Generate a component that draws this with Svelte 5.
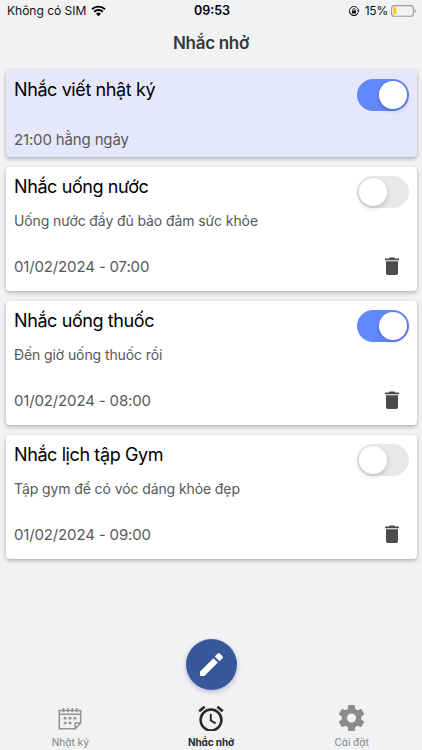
<script>
  const reminders = [
    { title: 'Nhắc viết nhật ký', note: '', time: '21:00 hằng ngày', on: true, daily: true },
    { title: 'Nhắc uống nước', note: 'Uống nước đầy đủ bảo đảm sức khỏe', time: '01/02/2024 - 07:00', on: false },
    { title: 'Nhắc uống thuốc', note: 'Đến giờ uống thuốc rồi', time: '01/02/2024 - 08:00', on: true },
    { title: 'Nhắc lịch tập Gym', note: 'Tập gym để có vóc dáng khỏe đẹp', time: '01/02/2024 - 09:00', on: false }
  ];
</script>

<div class="screen">
  <header class="status">
    <div class="carrier">
      <span>Không có SIM</span>
      <svg width="15" height="12" viewBox="0 0 15 12">
        <path d="M1 4.2A9.5 9.5 0 0 1 14 4.2M3.2 6.7A6.2 6.2 0 0 1 11.8 6.7" fill="none" stroke="#000" stroke-width="1.9" />
        <path d="M7.5 11.3L5 8.7A3.7 3.7 0 0 1 10 8.7Z" fill="#000" />
      </svg>
    </div>
    <div class="clock">09:53</div>
    <div class="power">
      <svg width="12" height="12" viewBox="0 0 12 12">
        <path d="M10.4 5.2A4.5 4.5 0 1 0 8.9 9.4M1.5 6.9A4.5 4.5 0 0 0 10.2 7.4" fill="none" stroke="#111" stroke-width="1" />
        <path d="M8.9 5.2H11.7L10.3 7.2Z" fill="#111" />
        <rect x="4" y="5.5" width="4" height="3" rx=".4" fill="#111" />
        <path d="M4.8 5.7V4.8a1.2 1.2 0 0 1 2.4 0V5.7" fill="none" stroke="#111" stroke-width=".8" />
      </svg>
      <span>15%</span>
      <svg class="battery" width="26" height="12" viewBox="0 0 26 12">
        <rect x=".6" y=".6" width="21.8" height="10.6" rx="2.8" fill="none" stroke="#9b9c9e" stroke-width="1.1" />
        <rect x="2.2" y="2.2" width="3" height="7.4" rx="1.1" fill="#fbcb12" />
        <path d="M23.7 4V8A2.2 2.2 0 0 0 23.7 4Z" fill="#9b9c9e" />
      </svg>
    </div>
  </header>

  <h1>Nhắc nhở</h1>

  <main>
    {#each reminders as r}
      <article class="card" class:daily={r.daily}>
        <div class="top">
          <h2>{r.title}</h2>
          <span class="switch" class:on={r.on}><i></i></span>
        </div>
        {#if r.note}<p>{r.note}</p>{/if}
        <div class="bottom">
          <time>{r.time}</time>
          {#if !r.daily}
            <svg width="14" height="18" viewBox="0 0 14 18" fill="#4b4b4b">
              <path d="M0 1.4H3.8L4.8.6H9.2L10.2 1.4H14V3.2H0ZM1 4.3H13V16.2a1.8 1.8 0 0 1-1.8 1.8H2.8a1.8 1.8 0 0 1-1.8-1.8Z" />
            </svg>
          {/if}
        </div>
      </article>
    {/each}
  </main>

  <div class="compose">
    <button aria-label="+">
      <svg width="33" height="33" viewBox="0 0 24 24" fill="#fff">
        <path d="M3.6 17.2V20.4H6.8L16.6 10.6 13.4 7.4ZM20 7.5a1.1 1.1 0 0 0 0-1.5L18 4a1.1 1.1 0 0 0-1.5 0L14.4 6.2 17.8 9.6Z" />
      </svg>
    </button>
  </div>

  <nav>
    <div class="tab">
      <svg width="26" height="26" viewBox="0 0 26 26" fill="none" stroke="#929395" stroke-width="1.6">
        <path d="M18.2 23.8H2.3V5.5H23.7V18L18.2 23.8V18H23.7M2.3 9.2H23.7M6.5 3V7.2M10.9 3V7.2M15.3 3V7.2M19.7 3V7.2" />
        <path d="M6.7 13.3h2.8M11.6 13.3h2.8M16.5 13.3h2.8M6.7 18h2.8M11.6 18h2.8" stroke-width="2.6" />
      </svg>
      <span>Nhật ký</span>
    </div>
    <div class="tab active">
      <svg width="26" height="26" viewBox="0 0 26 26" fill="none" stroke="#29292b" stroke-width="2.5">
        <circle cx="13" cy="15" r="10.4" />
        <path d="M1.2 6.3L6.6 1.8M19.4 1.8L24.8 6.3" stroke-width="2.7" />
        <path d="M12.8 9.1V15.5L17.6 18.3" stroke-width="2" />
      </svg>
      <span>Nhắc nhở</span>
    </div>
    <div class="tab">
      <svg width="27" height="27" viewBox="2 2 20 20" fill="#8a8b8d">
        <path d="M12 15.5A3.5 3.5 0 0 1 8.5 12 3.5 3.5 0 0 1 12 8.5a3.5 3.5 0 0 1 3.5 3.5 3.5 3.5 0 0 1-3.5 3.5m7.43-2.53c.04-.32.07-.64.07-.97s-.03-.66-.07-1l2.11-1.63c.19-.15.24-.42.12-.64l-2-3.46c-.12-.22-.39-.31-.61-.22l-2.49 1c-.52-.39-1.06-.73-1.69-.98l-.37-2.65A.506.506 0 0 0 14 2h-4c-.25 0-.46.18-.5.42l-.37 2.65c-.63.25-1.17.59-1.69.98l-2.49-1c-.22-.09-.49 0-.61.22l-2 3.46c-.13.22-.07.49.12.64L4.57 11c-.04.34-.07.67-.07 1s.03.65.07.97l-2.11 1.66c-.19.15-.25.42-.12.64l2 3.46c.12.22.39.3.61.22l2.49-1.01c.52.4 1.06.74 1.69.99l.37 2.65c.04.24.25.42.5.42h4c.25 0 .46-.18.5-.42l.37-2.65c.63-.26 1.17-.59 1.69-.99l2.49 1.01c.22.08.49 0 .61-.22l2-3.46c.12-.22.07-.49-.12-.64z" />
      </svg>
      <span>Cài đặt</span>
    </div>
  </nav>
</div>

<style>
  :global(body) { background: #f1f2f4; }
  .screen {
    width: 422px; height: 750px; overflow: hidden; box-sizing: border-box;
    display: flex; flex-direction: column; background: #f1f2f4;
    font-family: Inter, "Noto Sans", sans-serif; color: #000;
  }
  .status {
    display: grid; grid-template-columns: 1fr auto 1fr; align-items: center;
    height: 22px; padding: 0 5px 0 7px; flex: none; box-sizing: border-box;
    font-size: 12px; line-height: 22px;
  }
  .carrier, .power { display: flex; align-items: center; }
  .carrier { gap: 5px; letter-spacing: 0; color: #111; }
  .clock { font-weight: 600; font-size: 12.5px; letter-spacing: 0; }
  .power { justify-content: flex-end; color: #111; }
  .power span { margin: 0 3px 0 5px; letter-spacing: -0.2px; }
  h1 {
    margin: 0; height: 47.5px; flex: none; text-align: center;
    font-size: 17px; font-weight: 600; line-height: 43px; letter-spacing: -0.3px; color: #37383b;
  }
  main { display: flex; flex-direction: column; gap: 10px; padding: 0 5.5px; flex: none; }
  .card {
    height: 124px; box-sizing: border-box; padding: 8.6px 8px 0 8.5px;
    display: flex; flex-direction: column; border-radius: 4px; background: #fff;
    box-shadow: 0 2px 4px rgba(0, 0, 0, .24), 0 0 3px rgba(0, 0, 0, .07);
  }
  .card.daily { height: 87.5px; background: #e6e7fa; padding-top: 9px; }
  .top { display: flex; justify-content: space-between; height: 32px; }
  h2 { margin: 0; font-size: 18px; font-weight: 400; line-height: 22.6px; letter-spacing: -0.4px; }
  .switch {
    display: flex; width: 52px; height: 32px; box-sizing: border-box; padding: 2px;
    border-radius: 16px; background: #e8e8ea;
  }
  .switch.on { background: #6387fc; justify-content: flex-end; }
  .switch i { width: 28px; height: 28px; border-radius: 50%; background: #fff; box-shadow: 0 2px 5px rgba(0, 0, 0, .2); }
  p { margin: 3px 0 0; font-size: 14px; line-height: 20px; letter-spacing: -0.1px; color: #58585a; }
  .bottom {
    display: flex; justify-content: space-between; align-items: center; margin-top: auto;
    height: 20px; padding: 0 10px 15px 0; font-size: 15px; letter-spacing: -0.15px; color: #58585a;
  }
  .daily .bottom { padding-bottom: 7.6px; }
  .compose { display: flex; justify-content: center; margin-top: 79.5px; flex: none; }
  button {
    display: flex; align-items: center; justify-content: center; width: 51px; height: 51px;
    border: 0; padding: 0; border-radius: 50%; background: #39589c;
    box-shadow: 0 2px 5px rgba(40, 60, 110, .3);
  }
  nav { display: grid; grid-template-columns: repeat(3, 1fr); margin-top: 15.5px; flex: none; }
  .tab {
    display: flex; flex-direction: column; align-items: center; color: #929395;
    font-size: 10px; font-weight: 500; line-height: 18px; font-feature-settings: "cv11";
  }
  .tab svg { height: 26px; }
  .tab span { margin-top: 1.5px; }
  .active { color: #29292b; font-weight: 700; letter-spacing: -0.1px; }
</style>
